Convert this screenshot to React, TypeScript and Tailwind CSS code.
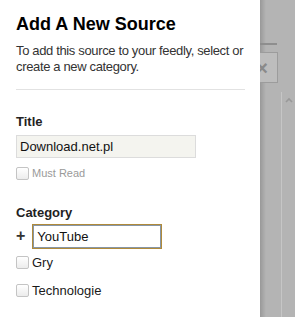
import React from 'react';

const CheckRow = ({ label, muted }: { label: string; muted?: boolean }) => (
  <label className="flex items-center gap-[3px]">
    <span className="w-[13px] h-[13px] rounded-[2px] border border-[#c4c4c4] bg-gradient-to-b from-white to-[#ececec]" />
    <span className={muted ? 'text-[11px] text-[#9a9a9a]' : 'text-[13px] text-[#1a1a1a]'}>{label}</span>
  </label>
);

const App = () => {
  return (
    <div className="flex w-[295px] h-[317px] overflow-hidden bg-[#b4b4b4]" style={{ fontFamily: '"Liberation Sans", Arial, sans-serif' }}>
      <div className="w-[260px] shrink-0 bg-white px-4 pt-[13px] relative z-10">
        <h2 className="text-[18px] leading-[22px] font-bold text-black">Add A New Source</h2>
        <p className="mt-2 w-[236px] text-[13px] leading-4 tracking-[-0.35px] text-[#333]">
          To add this source to your feedly, select or create a new category.
        </p>
        <div className="mt-[14px] h-px w-[229px] bg-[#e2e2e2]" />

        <div className="mt-6 text-[13px] leading-4 font-bold text-[#222]">Title</div>
        <div className="mt-[5px] w-[180px] h-[23px] border border-[#dcdcdc] bg-[#f4f4ef] px-[3px] text-[13px] leading-[21px] text-[#111]">
          Download.net.pl
        </div>
        <div className="mt-[7px]">
          <CheckRow label="Must Read" muted />
        </div>

        <div className="mt-[23px] text-[13px] leading-4 font-bold text-[#222]">Category</div>
        <div className="mt-[3px] flex items-center gap-[7px]">
          <span className="text-[16px] font-bold leading-none text-[#333]">+</span>
          <div className="w-[130px] h-[25px] border border-[#b08a3a] shadow-[inset_0_0_0_1px_#8796a6] px-1 text-[13px] leading-[23px] text-[#111]">
            YouTube
          </div>
        </div>
        <div className="mt-[4px] flex flex-col gap-[9px]">
          <CheckRow label="Gry" />
          <CheckRow label="Technologie" />
        </div>
      </div>

      <div className="relative flex-1 bg-[#b4b4b4]">
        <div className="absolute inset-y-0 left-0 w-[6px] bg-gradient-to-r from-[#999] to-[#b4b4b4]" />
        <div className="absolute left-0 top-[43px] w-[17px] h-[2px] bg-[#8e8e8e]" />
        <div className="absolute left-[-14px] top-[52px] w-[32px] h-[31px] border border-[#9c9c9c] bg-[#bdbdbd] flex items-center justify-center">
          <span className="text-[20px] text-[#8a8a8a] font-bold leading-none">×</span>
        </div>
        <div className="absolute left-[21px] top-[92px] bottom-0 w-px bg-[#c6c6c6]" />
        <svg className="absolute left-[25px] top-[97px]" width="8" height="6" viewBox="0 0 8 6">
          <path d="M1 5 L4 2 L7 5" stroke="#999" strokeWidth="1.6" fill="none" />
        </svg>
      </div>
    </div>
  );
};

export default App;
